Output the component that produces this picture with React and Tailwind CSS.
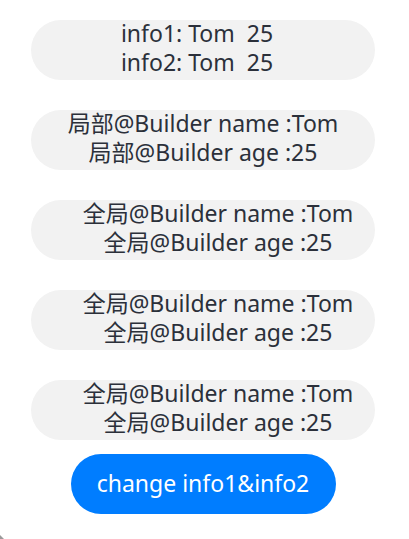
export default function App() {
  const box = "w-[344px] h-[60px] rounded-full bg-[#f2f2f2] flex flex-col items-center justify-center pb-[4px] text-[23px] leading-[29px] text-[#2b303a] whitespace-pre";
  return (
    <div className="relative w-[409px] h-[539px] bg-white overflow-hidden font-['Noto_Sans','Noto_Sans_CJK_SC',sans-serif]">
      <div className="flex flex-col items-center pt-[20px] gap-[30px] pr-[3px]">
        <div className={box + " pr-[12px]"}>
          <div>info1: Tom  25</div>
          <div>info2: Tom  25</div>
        </div>
        <div className={box}>
          <div>局部@Builder name :Tom</div>
          <div>局部@Builder age :25</div>
        </div>
        {[0, 1, 2].map((i) => (
          <div key={i} className={box + " pl-[30px]"}>
            <div>全局@Builder name :Tom</div>
            <div>全局@Builder age :25</div>
          </div>
        ))}
      </div>
      <div className="flex justify-center mt-[14px] pr-[3px]">
        <button className="w-[265px] h-[60px] rounded-full bg-[#007dff] text-white text-[23px] pb-[2px]">change info1&amp;info2</button>
      </div>
      <div className="absolute left-0 bottom-0 w-[4px] h-[4px] bg-[#9a9a9a] [clip-path:polygon(0_0,100%_100%,0_100%)]"></div>
    </div>
  );
}
